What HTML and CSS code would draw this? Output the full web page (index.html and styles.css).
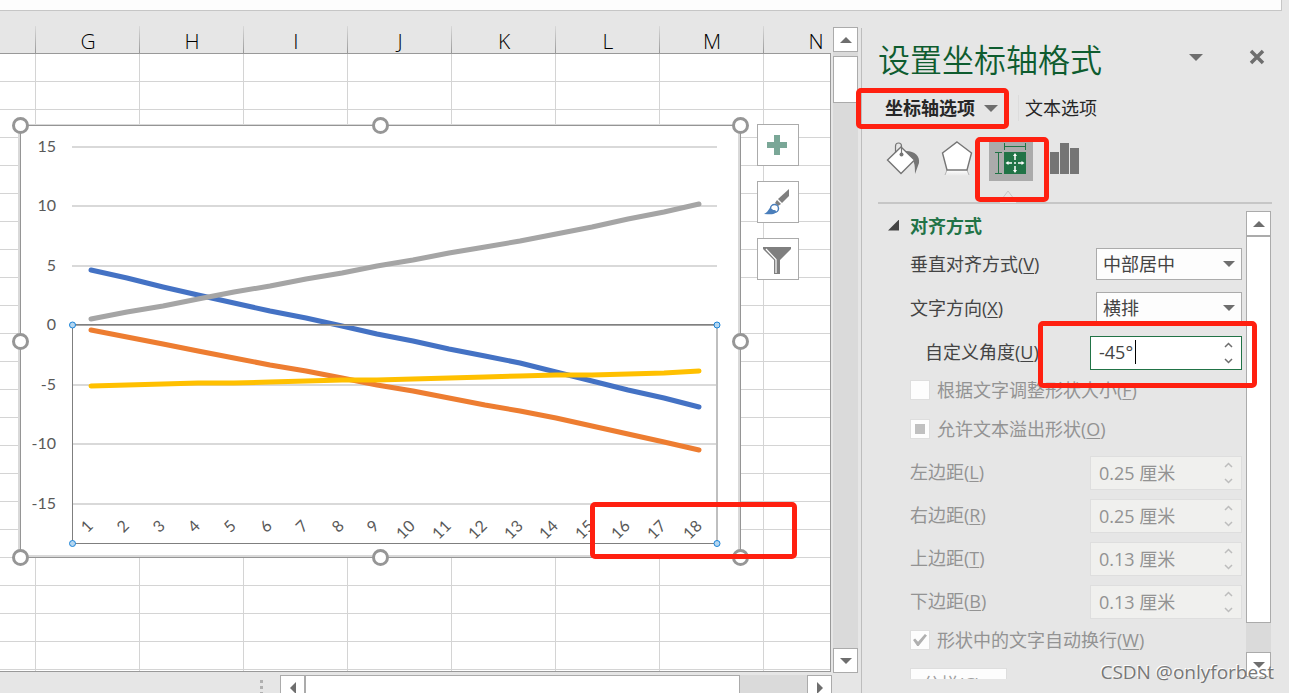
FILE: index.html
```html
<!DOCTYPE html>
<html lang="zh-CN">
<head>
    <meta charset="UTF-8">
    <meta name="viewport" content="width=device-width, initial-scale=1.0">
    <title>设置坐标轴格式</title>
    <link rel="stylesheet" href="styles.css">
</head>
<body>
    <div class="formula-bar"></div>
    <div class="workspace">
        <main class="sheet">
            <div class="sheet-body">
                <div class="grid">
                    <div class="col-headers">
                        <div class="col-head first"></div>
                        <div class="col-head">G</div>
                        <div class="col-head">H</div>
                        <div class="col-head">I</div>
                        <div class="col-head">J</div>
                        <div class="col-head">K</div>
                        <div class="col-head">L</div>
                        <div class="col-head">M</div>
                        <div class="col-head">N</div>
                    </div>
                    <div class="cells">
                        <svg class="chart" width="742" height="454" viewBox="10 115 742 454">
                            <!-- frame -->
                            <rect x="18" y="124" width="723" height="434" fill="#d9d9d9"/>
                            <rect x="20" y="125" width="721" height="433" fill="#959595"/>
                            <rect x="21" y="126" width="719" height="431" fill="#d9d9d9"/>
                            <rect x="21" y="126" width="717" height="429" fill="#fff"/>
                            <!-- gridlines -->
                            <g fill="#d9d9d9">
                                <rect x="72" y="146" width="645" height="2"/>
                                <rect x="72" y="205" width="645" height="2"/>
                                <rect x="72" y="265" width="645" height="2"/>
                                <rect x="72" y="384" width="645" height="2"/>
                                <rect x="72" y="443" width="645" height="2"/>
                                <rect x="72" y="503" width="645" height="2"/>
                            </g>
                            <!-- series -->
                            <g class="series">
                                <polyline stroke="#4472c4" points="91,270 127,278 163,287 198,295 234,303 270,311 306,318 342,326 377,334 413,341 449,349 485,356 520,363 556,372 592,381 628,390 664,398 699,407"/>
                                <polyline stroke="#ed7d31" points="91,330 127,337 163,344 198,351 234,358 270,365 306,371 342,378 377,385 413,391 449,398 485,405 520,411 556,418 592,426 628,434 664,442 699,450"/>
                                <polyline stroke="#a5a5a5" points="91,319 127,312 163,306 198,299 234,292 270,286 306,279 342,273 377,266 413,260 449,253 485,247 520,241 556,234 592,227 628,219 664,212 699,204"/>
                                <polyline stroke="#ffc000" points="91,386 127,385 163,384 198,383 234,383 270,382 306,381 342,380 377,380 413,379 449,378 485,377 520,376 556,375 592,375 628,374 664,373 699,371"/>
                            </g>
                            <!-- selected axis -->
                            <rect x="72" y="324" width="645" height="1" fill="#808080"/>
                            <rect x="72" y="325" width="645" height="1" fill="#a6a6a6"/>
                            <rect x="716" y="326" width="2" height="217" fill="#bfbfbf"/>
                            <rect x="72" y="325" width="1" height="218" fill="#7f7f7f"/>
                            <rect x="72" y="543" width="645" height="1" fill="#7f7f7f"/>
                            <g fill="#b4d6f0" stroke="#1b84d8">
                                <circle cx="72.5" cy="325" r="3"/>
                                <circle cx="717" cy="325" r="3"/>
                                <circle cx="72.5" cy="543.5" r="3"/>
                                <circle cx="717" cy="543.5" r="3"/>
                            </g>
                            <g class="axis-y">
                                <text x="56" y="152">15</text>
                                <text x="56" y="211">10</text>
                                <text x="56" y="271">5</text>
                                <text x="56" y="330">0</text>
                                <text x="56" y="390">-5</text>
                                <text x="56" y="449">-10</text>
                                <text x="56" y="509">-15</text>
                            </g>
                            <g class="axis-x" id="axis-x"></g>
                            <g fill="#fff" stroke="#969696" stroke-width="3">
                                <circle cx="20.5" cy="125.5" r="7"/>
                                <circle cx="380.5" cy="125.5" r="7"/>
                                <circle cx="740.5" cy="125.5" r="7"/>
                                <circle cx="20.5" cy="341.5" r="7"/>
                                <circle cx="740.5" cy="341.5" r="7"/>
                                <circle cx="20.5" cy="557.5" r="7"/>
                                <circle cx="380.5" cy="557.5" r="7"/>
                                <circle cx="740.5" cy="557.5" r="7"/>
                            </g>
                        </svg>
                        <div class="chart-tools">
                            <button class="tool-btn" aria-label="图表元素">
                                <svg width="40" height="40" viewBox="0 0 40 40"><path d="M16 10h6v7h7v6h-7v7h-6v-7H9v-6h7z" fill="#7aa797"/></svg>
                            </button>
                            <button class="tool-btn" aria-label="图表样式">
                                <svg width="40" height="40" viewBox="0 0 40 40">
                                    <path d="M31 7v7l-7 7-4-4z" fill="#7f7f7f"/>
                                    <path d="M19 18l4 4-3 2-3-3z" fill="#7f7f7f"/>
                                    <path d="M6 32c4-2 4-4 6-6l5 5c-2 2-6 1-11 1z" fill="#4a7ebb"/>
                                    <circle cx="16.5" cy="26.5" r="4" fill="#fff" stroke="#4a7ebb" stroke-width="1.5"/>
                                    <path d="M11 28c2-2 3-1 4 0 2 0 3 0 3 2-2 2-5 2-8 1z" fill="#4a7ebb"/>
                                </svg>
                            </button>
                            <button class="tool-btn" aria-label="图表筛选器">
                                <svg width="40" height="40" viewBox="0 0 40 40">
                                    <path d="M5 8h28v2L22 21v14h-6V21L5 10z" fill="#7f7f7f"/>
                                    <path d="M8 10l10 10.5V34" fill="none" stroke="#fff" stroke-width="1.2"/>
                                </svg>
                            </button>
                        </div>
                        <div class="mark mark-labels"></div>
                    </div>
                </div>
                <div class="v-scroll">
                    <button class="scroll-btn" aria-label="向上滚动"><i class="tri up"></i></button>
                    <div class="v-track"><div class="v-thumb"></div></div>
                    <button class="scroll-btn" aria-label="向下滚动"><i class="tri down"></i></button>
                </div>
            </div>
            <div class="h-scroll">
                <div class="grip"><i></i><i></i><i></i></div>
                <button class="scroll-btn" aria-label="向左滚动"><i class="tri left"></i></button>
                <div class="h-track"><div class="h-thumb"></div></div>
                <button class="scroll-btn" aria-label="向右滚动"><i class="tri right"></i></button>
            </div>
        </main>

        <aside class="pane">
            <header class="pane-head">
                <h1>设置坐标轴格式</h1>
                <button class="plain-btn" aria-label="任务窗格选项"><i class="tri down big"></i></button>
                <button class="plain-btn close" aria-label="关闭">
                    <svg width="16" height="16" viewBox="0 0 16 16"><path d="M2 2l12 12M14 2L2 14" stroke="#6e6e6e" stroke-width="3.5"/></svg>
                </button>
            </header>
            <nav class="tabs">
                <button class="tab active">坐标轴选项<i class="tri down big"></i></button>
                <button class="tab">文本选项</button>
            </nav>
            <div class="icon-tabs">
                <button class="icon-tab" aria-label="填充与线条">
                    <svg width="44" height="42" viewBox="0 0 44 42">
                        <path d="M25 12c9 0 14 5 13 12l-4 11c0-10 0-14-9-20z" fill="#757575"/>
                        <path d="M20 8l13.500 13L20 34.500 6.500 21z" fill="#fff" stroke="#757575" stroke-width="1.4"/>
                        <path d="M14.500 14V7c0-4 6-4 6 0v8" fill="none" stroke="#757575" stroke-width="1.2"/>
                        <circle cx="20.5" cy="15.5" r="2" fill="#757575"/>
                    </svg>
                </button>
                <button class="icon-tab" aria-label="效果">
                    <svg width="44" height="42" viewBox="0 0 44 42">
                        <defs>
                            <linearGradient id="fade" x2="0" y2="1">
                                <stop stop-color="#fff"/>
                                <stop offset="1" stop-color="#e6e6e6"/>
                            </linearGradient>
                        </defs>
                        <path d="M12 31h20l2 6H10z" fill="url(#fade)"/>
                        <path d="M12 31l-2 5M32 31l2 5" stroke="#b5b5b5"/>
                        <path d="M22 3l14.500 11L32 31H12L7.500 14z" fill="#fff" stroke="#757575" stroke-width="1.4"/>
                    </svg>
                </button>
                <button class="icon-tab selected" aria-label="大小与属性">
                    <svg width="44" height="42" viewBox="0 0 44 42">
                        <path d="M15.500 4v7M36.500 4v7M15 7.500h22M6 13.500h7M6 34.500h7M9.500 13v22" fill="none" stroke="#217346"/>
                        <rect x="15" y="13" width="22" height="22" fill="#217346"/>
                        <path d="M26 16v5M26 27v5M18 24h5M29 24h5M25 24h2" stroke="#fff" stroke-width="1.5"/>
                        <path d="M26 14l2 3h-4zM26 34l2-3h-4zM16.500 24l3-2v4zM35.500 24l-3-2v4z" fill="#fff"/>
                    </svg>
                </button>
                <button class="icon-tab" aria-label="坐标轴选项">
                    <svg width="44" height="42" viewBox="0 0 44 42"><path d="M7 13h9v22H7zM17 4h9v31h-9zM27 9h9v26h-9z" fill="#757575"/></svg>
                </button>
                <svg class="pointer" width="22" height="14" viewBox="0 0 22 14"><path d="M1 13h1l9-12 9 12h1" fill="#e6e6e6" stroke="#c6c6c6"/></svg>
            </div>

            <div class="pane-body">
                <form class="form">
                    <button type="button" class="section"><i class="fold"></i>对齐方式</button>
                    <div class="group">
                        <div class="row">
                            <label for="valign">垂直对齐方式(<u>V</u>)</label>
                            <span class="select"><select id="valign"><option>中部居中</option></select></span>
                        </div>
                        <div class="row">
                            <label for="direction">文字方向(<u>X</u>)</label>
                            <span class="select"><select id="direction"><option>横排</option></select></span>
                        </div>
                        <div class="row indent">
                            <label for="angle">自定义角度(<u>U</u>)</label>
                            <span class="spin focus">
                                <input id="angle" type="text" value="-45°">
                                <i class="caret"></i>
                                <span class="spin-btns">
                                    <button type="button" aria-label="增加"><svg width="9" height="6" viewBox="0 0 9 6"><path d="M1 5l3.500-3.500L8 5"/></svg></button>
                                    <button type="button" aria-label="减少"><svg width="9" height="6" viewBox="0 0 9 6"><path d="M1 1l3.500 3.500L8 1"/></svg></button>
                                </span>
                            </span>
                        </div>
                    </div>
                    <div class="group checks">
                        <label class="check"><input type="checkbox" disabled>根据文字调整形状大小(<u>F</u>)</label>
                        <label class="check"><input type="checkbox" class="mixed" disabled>允许文本溢出形状(<u>O</u>)</label>
                    </div>
                    <div class="group margins">
                        <div class="row off">
                            <label for="m-left">左边距(<u>L</u>)</label>
                            <span class="spin">
                                <input id="m-left" type="text" value="0.25 厘米" disabled>
                                <span class="spin-btns">
                                    <button type="button" aria-label="增加" disabled><svg width="9" height="6" viewBox="0 0 9 6"><path d="M1 5l3.500-3.500L8 5"/></svg></button>
                                    <button type="button" aria-label="减少" disabled><svg width="9" height="6" viewBox="0 0 9 6"><path d="M1 1l3.500 3.500L8 1"/></svg></button>
                                </span>
                            </span>
                        </div>
                        <div class="row off">
                            <label for="m-right">右边距(<u>R</u>)</label>
                            <span class="spin">
                                <input id="m-right" type="text" value="0.25 厘米" disabled>
                                <span class="spin-btns">
                                    <button type="button" aria-label="增加" disabled><svg width="9" height="6" viewBox="0 0 9 6"><path d="M1 5l3.500-3.500L8 5"/></svg></button>
                                    <button type="button" aria-label="减少" disabled><svg width="9" height="6" viewBox="0 0 9 6"><path d="M1 1l3.500 3.500L8 1"/></svg></button>
                                </span>
                            </span>
                        </div>
                        <div class="row off">
                            <label for="m-top">上边距(<u>T</u>)</label>
                            <span class="spin">
                                <input id="m-top" type="text" value="0.13 厘米" disabled>
                                <span class="spin-btns">
                                    <button type="button" aria-label="增加" disabled><svg width="9" height="6" viewBox="0 0 9 6"><path d="M1 5l3.500-3.500L8 5"/></svg></button>
                                    <button type="button" aria-label="减少" disabled><svg width="9" height="6" viewBox="0 0 9 6"><path d="M1 1l3.500 3.500L8 1"/></svg></button>
                                </span>
                            </span>
                        </div>
                        <div class="row off">
                            <label for="m-bottom">下边距(<u>B</u>)</label>
                            <span class="spin">
                                <input id="m-bottom" type="text" value="0.13 厘米" disabled>
                                <span class="spin-btns">
                                    <button type="button" aria-label="增加" disabled><svg width="9" height="6" viewBox="0 0 9 6"><path d="M1 5l3.500-3.500L8 5"/></svg></button>
                                    <button type="button" aria-label="减少" disabled><svg width="9" height="6" viewBox="0 0 9 6"><path d="M1 1l3.500 3.500L8 1"/></svg></button>
                                </span>
                            </span>
                        </div>
                    </div>
                    <div class="group wrap">
                        <label class="check"><input type="checkbox" checked disabled>形状中的文字自动换行(<u>W</u>)</label>
                    </div>
                    <button type="button" class="columns-btn" disabled>分栏(<u>C</u>)...</button>
                </form>
                <div class="v-scroll pane-scroll">
                    <button class="scroll-btn" aria-label="向上滚动"><i class="tri up"></i></button>
                    <div class="v-track"><div class="v-thumb"></div></div>
                    <button class="scroll-btn" aria-label="向下滚动"><i class="tri down"></i></button>
                </div>
            </div>

            <div class="mark mark-tab"></div>
            <div class="mark mark-icon"></div>
            <div class="mark mark-angle"></div>
            <div class="watermark">CSDN @onlyforbest</div>
        </aside>
    </div>

    <script>
        // Category labels, rotated 45 degrees
        const axis = document.getElementById('axis-x');
        for (let i = 0; i < 18; i++) {
            const x = Math.round(94 + i * 35.8);
            const label = document.createElementNS('http://www.w3.org/2000/svg', 'text');
            label.setAttribute('transform', `translate(${x} 527) rotate(-45)`);
            label.textContent = i + 1;
            axis.appendChild(label);
        }
    </script>
</body>
</html>
```
FILE: styles.css
```css
* {
    margin: 0;
    padding: 0;
    box-sizing: border-box;
}

body {
    height: 100vh;
    display: flex;
    flex-direction: column;
    overflow: hidden;
    background: #e6e6e6;
    color: #444;
    font-family: 'Open Sans', 'Noto Sans CJK SC', sans-serif;
    font-size: 18px;
}

button,
input,
select {
    font: inherit;
    color: inherit;
}

button {
    border: none;
    background: none;
}

svg {
    display: block;
}

.formula-bar {
    height: 11px;
    flex: none;
    margin-right: 7px;
    background: #fdfdfd;
    border: solid #c6c6c6;
    border-width: 0 1px 1px 0;
}

.workspace {
    flex: 1;
    min-height: 0;
    display: flex;
}

/* Worksheet */
.sheet {
    flex: 1;
    min-width: 0;
    display: flex;
    flex-direction: column;
}

.sheet-body {
    flex: 1;
    min-height: 0;
    display: flex;
    gap: 2px;
    padding-right: 3px;
}

.grid {
    flex: 1;
    min-width: 0;
    display: flex;
    flex-direction: column;
}

.col-headers {
    display: flex;
    height: 43px;
    flex: none;
    padding-top: 15px;
    overflow: hidden;
    border-bottom: 1px solid #999;
}

.col-head {
    width: 104px;
    flex: none;
    color: #000;
    font-family: 'Open Sans', sans-serif;
    font-size: 21px;
    font-weight: 300;
    line-height: 31px;
    text-align: center;
    background: linear-gradient(#d9d9d9, #999) right / 1px 100% no-repeat;
}

.col-head.first {
    width: 36px;
}

.cells {
    flex: 1;
    position: relative;
    margin-bottom: 1px;
    background-color: #fff;
    background-image: linear-gradient(90deg, #d4d4d4 1px, transparent 1px), linear-gradient(transparent 27px, #d4d4d4 27px);
    background-size: 104px 100%, 100% 28px;
    background-position: 35px 0, 0 0;
    border: solid #999;
    border-width: 0 1px 1px 0;
}

.chart {
    position: absolute;
    left: 10px;
    top: 61px;
}

.series {
    fill: none;
    stroke-width: 5;
    stroke-linecap: round;
    stroke-linejoin: round;
}

.axis-y,
.axis-x {
    fill: #595959;
    font-family: Lato, sans-serif;
    font-size: 16px;
    text-anchor: end;
}

.chart-tools {
    position: absolute;
    left: 757px;
    top: 70px;
    display: flex;
    flex-direction: column;
    gap: 15px;
}

.tool-btn {
    width: 42px;
    height: 42px;
    background: #fff;
    border: 1px solid #ababab;
}

/* Scrollbars */
.v-scroll {
    width: 25px;
    flex: none;
    display: flex;
    flex-direction: column;
    margin-top: 16px;
}

.scroll-btn {
    width: 25px;
    height: 25px;
    flex: none;
    display: flex;
    align-items: center;
    justify-content: center;
    background: #fff;
    border: 1px solid #ababab;
}

.v-track {
    flex: 1;
    padding-top: 4px;
    background: #dadada;
}

.v-thumb {
    height: 47px;
    background: #fff;
    border: 1px solid #ababab;
}

.h-scroll {
    height: 20px;
    flex: none;
    display: flex;
    overflow: hidden;
    padding: 2px 29px 0 260px;
}

.h-track {
    flex: 1;
    background: #dadada;
}

.h-thumb {
    width: 435px;
    height: 25px;
    background: #fff;
    border: 1px solid #ababab;
}

.grip {
    width: 20px;
    display: flex;
    flex-direction: column;
    gap: 3px;
    padding-top: 5px;
}

.grip i {
    width: 3px;
    height: 3px;
    flex: none;
    background: #b0b0b0;
}

.tri {
    border: solid transparent;
}

.tri.up {
    border-width: 0 6px 6px;
    border-bottom-color: #6e6e6e;
}

.tri.down {
    border-width: 6px 6px 0;
    border-top-color: #6e6e6e;
}

.tri.left {
    border-width: 6px 6px 6px 0;
    border-right-color: #6e6e6e;
}

.tri.right {
    border-width: 6px 0 6px 6px;
    border-left-color: #6e6e6e;
}

.tri.big {
    border-width: 7px 7px 0;
}

/* Format pane */
.pane {
    width: 428px;
    flex: none;
    position: relative;
    display: flex;
    flex-direction: column;
    margin-top: 17px;
    padding: 0 17px 14px 16px;
    border-left: 1px solid #bdbdbd;
}

.pane-head {
    height: 64px;
    flex: none;
    display: flex;
    align-items: center;
}

.pane-head h1 {
    flex: 1;
    padding-bottom: 4px;
    color: #0e5c2f;
    font-family: 'Noto Sans CJK SC', sans-serif;
    font-size: 32px;
    font-weight: 350;
    line-height: 48px;
}

.plain-btn {
    padding-bottom: 6px;
}

.plain-btn .tri {
    display: block;
}

.plain-btn.close {
    margin: 0 7px 0 46px;
}

.tabs {
    height: 34px;
    flex: none;
    display: flex;
    align-items: center;
    padding: 0 0 2px 7px;
}

.tab {
    display: flex;
    align-items: center;
    gap: 9px;
    line-height: 26px;
    color: #262626;
}

.tab.active {
    padding-right: 20px;
    margin-right: 6px;
    font-weight: 700;
    border-right: 1px solid #dcdcdc;
}

.icon-tabs {
    height: 78px;
    flex: none;
    position: relative;
    display: flex;
    gap: 10px;
    padding: 13px 0 0 3px;
    border-bottom: 2px solid #c6c6c6;
}

.icon-tab {
    width: 44px;
    height: 42px;
}

.icon-tab.selected {
    background: #ababab;
}

.pointer {
    position: absolute;
    left: 119px;
    bottom: -2px;
}

.pane-body {
    flex: 1;
    min-height: 0;
    display: flex;
    gap: 4px;
}

.form {
    flex: 1;
    overflow: hidden;
    padding: 7px 0 0 32px;
}

.section {
    height: 30px;
    display: flex;
    align-items: center;
    gap: 11px;
    margin-left: -22px;
    padding-bottom: 2px;
    color: #217346;
    font-weight: 700;
}

.fold {
    width: 11px;
    height: 11px;
    background: #444;
    clip-path: polygon(100% 0, 100% 100%, 0 100%);
}

.group {
    display: flex;
    flex-direction: column;
    gap: 12px;
    margin-top: 7px;
}

.group.checks {
    gap: 19px;
    margin-top: 10px;
}

.group.margins {
    gap: 9px;
    margin-top: 17px;
}

.group.wrap {
    margin-top: 11px;
}

.row {
    display: flex;
    align-items: center;
    justify-content: space-between;
}

.row label,
.check {
    white-space: nowrap;
    line-height: 20px;
}

.row.indent {
    padding-left: 15px;
}

.row.indent label,
.row.off label {
    padding-bottom: 2px;
}

u {
    text-decoration-thickness: 1px;
    text-underline-offset: 2px;
}

.select {
    position: relative;
    width: 146px;
    height: 32px;
}

.select select {
    width: 100%;
    height: 100%;
    padding-left: 6px;
    appearance: none;
    background: #fdfdfd;
    border: 1px solid #ababab;
    border-radius: 0;
}

.select::after {
    content: '';
    position: absolute;
    right: 7px;
    top: 13px;
    border: solid transparent;
    border-width: 6px 6px 0;
    border-top-color: #6e6e6e;
    pointer-events: none;
}

.spin {
    position: relative;
    width: 152px;
    height: 34px;
    flex: none;
    display: flex;
    background: #f0f0ee;
    border: 1px solid #dedede;
}

.spin.focus {
    background: #fff;
    border-color: #217346;
}

.spin input {
    flex: 1;
    min-width: 0;
    padding: 0 0 3px 8px;
    background: none;
    border: none;
    outline: none;
}

.caret {
    position: absolute;
    left: 44px;
    top: 3px;
    width: 1px;
    height: 24px;
    background: #000;
}

.spin-btns {
    width: 26px;
    display: flex;
    flex-direction: column;
}

.spin-btns button {
    flex: 1;
    display: flex;
    align-items: center;
    justify-content: center;
}

.spin-btns path {
    fill: none;
    stroke: #6e6e6e;
    stroke-width: 1.5;
}

.off,
.check {
    color: #939393;
}

.off .spin-btns path {
    stroke: #bdbdbd;
}

.check {
    display: flex;
    align-items: center;
    height: 20px;
}

.check input {
    width: 20px;
    height: 20px;
    margin-right: 7px;
    appearance: none;
    display: grid;
    place-items: center;
    background: #fdfdfd;
    border: 1px solid #dedede;
}

.check input.mixed::before {
    content: '';
    width: 10px;
    height: 10px;
    background: #c0c0c0;
}

.check input:checked::before {
    content: '';
    width: 14px;
    height: 12px;
    background: #b0b0b0;
    clip-path: polygon(0 50%, 15% 38%, 36% 65%, 85% 0, 100% 12%, 40% 100%, 30% 100%);
}

.columns-btn {
    display: block;
    width: 97px;
    height: 32px;
    margin-top: 18px;
    padding-bottom: 2px;
    color: #a0a0a0;
    background: #fdfdfd;
    border: 1px solid #dedede;
}

.pane-scroll {
    margin: 7px 1px 2px 0;
}

.pane-scroll .v-track {
    padding: 0;
}

.pane-scroll .v-thumb {
    height: 93%;
}

/* Red highlight boxes */
.mark {
    position: absolute;
    border: 5px solid #ff2010;
    border-radius: 5px;
    pointer-events: none;
}

.mark-labels {
    left: 590px;
    top: 448px;
    width: 207px;
    height: 57px;
}

.mark-tab {
    left: -6px;
    top: 60px;
    width: 153px;
    height: 41px;
}

.mark-icon {
    left: 113px;
    top: 109px;
    width: 74px;
    height: 65px;
}

.mark-angle {
    left: 176px;
    top: 293px;
    width: 219px;
    height: 67px;
}

.watermark {
    position: absolute;
    right: 15px;
    bottom: 7px;
    color: #777;
    font-size: 19px;
    line-height: 28px;
    text-shadow: -1px -1px 0 #fff;
}
```
